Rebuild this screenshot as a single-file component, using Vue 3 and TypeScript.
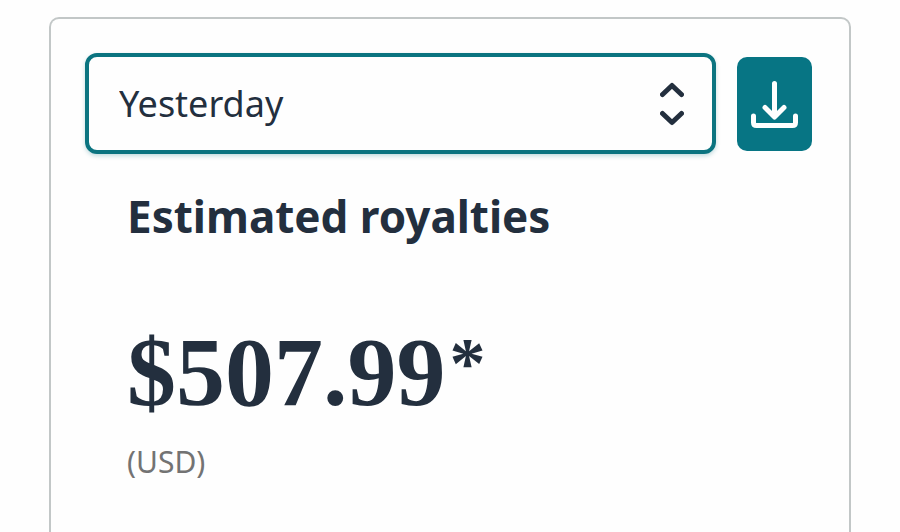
<script setup lang="ts">
import { computed, ref } from 'vue'

interface Period {
  id: string
  label: string
  royalties: number
}

const periods: Period[] = [{ id: 'yesterday', label: 'Yesterday', royalties: 507.99 }]

const selectedId = ref<string>('yesterday')

const amount = computed<string>(() => {
  const period = periods.find((p) => p.id === selectedId.value) ?? periods[0]
  return `$${period.royalties.toFixed(2)}`
})
</script>

<template>
  <main class="page">
    <section class="card">
      <div class="toolbar">
        <div class="picker">
          <select v-model="selectedId" class="picker-select" aria-label="Reporting period">
            <option v-for="p in periods" :key="p.id" :value="p.id">{{ p.label }}</option>
          </select>
          <svg class="picker-icon" viewBox="0 0 24 44" aria-hidden="true">
            <path d="M2.5 12.500 12 3.500 21.500 12.500M2.500 31.500 12 40.500 21.500 31.500" />
          </svg>
        </div>
        <button class="download" type="button" aria-label="Download report">
          <svg class="download-icon" viewBox="0 0 48 48" aria-hidden="true">
            <path d="M23.500 3.500V36M14 27.500 23.500 37 33 27.500" />
            <path d="M2.500 36V42.500Q2.500 45.500 5.500 45.500H41.500Q44.500 45.500 44.500 42.500V36" />
          </svg>
        </button>
      </div>
      <div class="summary">
        <h1 class="title">Estimated royalties</h1>
        <p class="amount">{{ amount }}<span class="footnote-mark">*</span></p>
        <p class="currency">(USD)</p>
      </div>
    </section>
  </main>
</template>

<style>
body {
  margin: 0;
  background: #fefefe;
}
</style>

<style scoped>
.page {
  box-sizing: border-box;
  display: flex;
  height: 100vh;
  overflow: hidden;
  padding: 17px 49px 0;
  color: #232f3e;
  font-family: 'Noto Sans', 'Open Sans', sans-serif;
}

.card {
  flex: 1;
  min-width: 0;
  padding: 34px 37px 0 34px;
  border: 2px solid #c2c7c7;
  border-bottom: 0;
  border-radius: 10px 10px 0 0;
}

.toolbar {
  display: flex;
  align-items: center;
  gap: 21px;
}

.picker {
  position: relative;
  flex: 1;
  min-width: 0;
}

.picker-select {
  display: block;
  box-sizing: border-box;
  width: 100%;
  height: 101px;
  padding: 0 72px 0 30px;
  border: 4px solid #0b7480;
  border-radius: 12px;
  outline: 0;
  appearance: none;
  background: #fefefe;
  box-shadow: 0 2px 4px rgb(11 116 128 / 25%);
  color: inherit;
  font: 400 36px 'Noto Sans', 'Open Sans', sans-serif;
}

.picker-icon {
  position: absolute;
  top: 29px;
  right: 32px;
  width: 24px;
  height: 44px;
  fill: none;
  stroke: currentColor;
  stroke-width: 5;
  stroke-linecap: round;
  stroke-linejoin: round;
  pointer-events: none;
}

.download {
  display: grid;
  place-items: center;
  width: 75px;
  height: 94px;
  padding: 0;
  border: 0;
  border-radius: 10px;
  background: #077584;
  color: #fefefe;
}

.download-icon {
  width: 48px;
  height: 48px;
  fill: none;
  stroke: currentColor;
  stroke-width: 5;
  stroke-linecap: round;
  stroke-linejoin: round;
}

.summary {
  padding: 32px 42px 0;
}

.title {
  margin: 0;
  font-size: 44px;
  font-weight: 700;
  line-height: 60px;
}

.amount {
  margin: 72px 0 0;
  font-family: 'Liberation Serif', serif;
  font-size: 98px;
  font-weight: 700;
  line-height: 108px;
}

.footnote-mark {
  margin-left: 4px;
  font-size: 72px;
  line-height: 1;
  vertical-align: 18px;
}

.currency {
  margin: 16px 0 0;
  color: #737373;
  font-size: 30px;
  line-height: 40px;
}
</style>
